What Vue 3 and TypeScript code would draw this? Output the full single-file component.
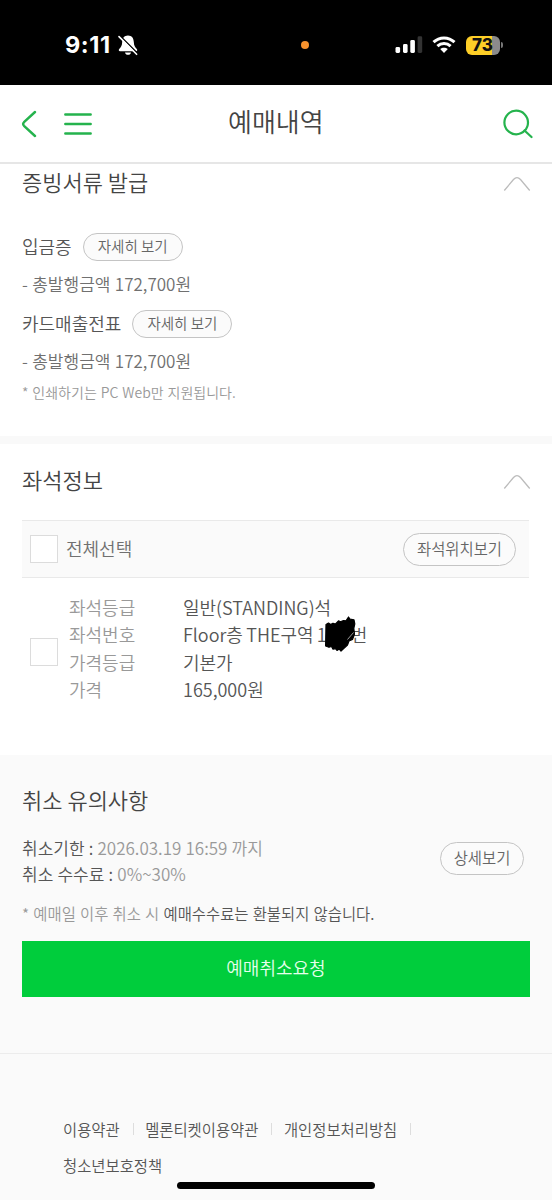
<script setup lang="ts">
interface Receipt {
  name: string
  amount: string
}

const receipts: Receipt[] = [
  { name: '입금증', amount: '- 총발행금액 172,700원' },
  { name: '카드매출전표', amount: '- 총발행금액 172,700원' },
]

interface SeatField {
  label: string
  value: string
  hidden?: boolean
}

const seatFields: SeatField[] = [
  { label: '좌석등급', value: '일반(STANDING)석' },
  { label: '좌석번호', value: 'Floor층 THE구역 1', hidden: true },
  { label: '가격등급', value: '기본가' },
  { label: '가격', value: '165,000원' },
]

const footerLinks: string[] = ['이용약관', '멜론티켓이용약관', '개인정보처리방침']
</script>

<template>
  <div class="screen">
    <div class="status">
      <span class="time">9:11</span>
      <svg class="bell" width="20" height="21" viewBox="0 0 20 21">
        <path d="M10 .5C6.200.5 4.300 3.300 4.200 7c-.1 3.800-1.400 5.300-3 7-.8.9-.4 2.200.8 2.200h16c1.200 0 1.600-1.300.8-2.200-1.600-1.700-2.900-3.200-3-7C15.700 3.300 13.800.5 10 .5Z" fill="#fff" />
        <path d="M7 17.400h6c-.3 1.600-1.400 2.400-3 2.400s-2.700-.8-3-2.400Z" fill="#fff" />
        <path d="M2.200 1 19.500 18.300" stroke="#000" stroke-width="1.500" />
        <path d="M1 1.600 18.600 19.300" stroke="#fff" stroke-width="1.600" stroke-linecap="round" />
      </svg>
      <span class="mic-dot"></span>
      <svg class="signal" width="28" height="18" viewBox="0 0 28 18">
        <rect x="0.500" y="11" width="4.600" height="6" rx="1.400" fill="#fff" />
        <rect x="8" y="8" width="4.600" height="9" rx="1.400" fill="#fff" />
        <rect x="15.300" y="4" width="4.600" height="13" rx="1.400" fill="#fff" />
        <rect x="22.600" y="0.300" width="4.600" height="16.700" rx="1.400" fill="#333" />
      </svg>
      <svg class="wifi" width="24" height="18" viewBox="0 0 24 18">
        <g fill="none" stroke="#fff" stroke-width="3">
          <path d="M1.500 6.200C7.400.5 16.600.5 22.500 6.200" />
          <path d="M5.400 10.200c3.700-3.500 9.500-3.500 13.200 0" />
        </g>
        <path d="M12 17 8.200 13.100c2.200-1.900 5.400-1.900 7.600 0Z" fill="#fff" />
      </svg>
      <span class="battery"><span class="level">73</span></span>
      <span class="battery-cap"></span>
    </div>

    <header class="header">
      <svg class="back" width="16" height="28" viewBox="0 0 16 28">
        <path d="M14 2 3 12.200Q1.300 14 3 15.800L14 26" fill="none" stroke="#25b34d" stroke-width="2.400" stroke-linecap="round" />
      </svg>
      <svg class="menu" width="28" height="24" viewBox="0 0 28 24">
        <path d="M1.300 2.500h25.400M1.300 12h25.400M1.300 21.500h25.400" stroke="#25b34d" stroke-width="2.400" stroke-linecap="round" />
      </svg>
      <h1>예매내역</h1>
      <svg class="search" width="30" height="30" viewBox="0 0 30 30">
        <circle cx="13.200" cy="13.500" r="11.800" fill="none" stroke="#25b34d" stroke-width="2.200" />
        <path d="m21.500 21.500 7 6.500" stroke="#25b34d" stroke-width="2.200" stroke-linecap="round" />
      </svg>
    </header>

    <section class="receipts">
      <div class="section-title">
        <h2>증빙서류 발급</h2>
        <svg class="chevron" width="28" height="16" viewBox="0 0 28 16">
          <path d="M1.300 14.500 10.500 3.500q3.500-3.700 7 0l9.200 11" fill="none" stroke="#bcbcbc" stroke-width="1.300" />
        </svg>
      </div>
      <div v-for="item in receipts" :key="item.name" class="receipt">
        <div class="receipt-head">
          <span>{{ item.name }}</span>
          <button class="pill small">자세히 보기</button>
        </div>
        <p>{{ item.amount }}</p>
      </div>
      <p class="print-note">* 인쇄하기는 PC Web만 지원됩니다.</p>
    </section>

    <section class="seats">
      <div class="section-title">
        <h2>좌석정보</h2>
        <svg class="chevron" width="28" height="16" viewBox="0 0 28 16">
          <path d="M1.300 14.500 10.500 3.500q3.500-3.700 7 0l9.200 11" fill="none" stroke="#bcbcbc" stroke-width="1.300" />
        </svg>
      </div>
      <div class="select-all">
        <span class="checkbox"></span>
        <span class="select-label">전체선택</span>
        <button class="pill medium">좌석위치보기</button>
      </div>
      <div class="seat">
        <span class="checkbox"></span>
        <dl>
          <div v-for="field in seatFields" :key="field.label" class="field">
            <dt>{{ field.label }}</dt>
            <dd>
              <span>{{ field.value }}</span>
              <span v-if="field.hidden" class="hidden-number">
                <svg class="scribble" width="34" height="38" viewBox="0 0 34 38">
                  <path d="M3 9.500 5.500 8l2 1.500L10 8.200l2.500.8 3-3.200 2 1 3-1.300 2.500.3L25.500 2l1.500 2.200 4 .6.800 4-1 4.700.7 5.500-2 5.500-3.500 1.500-1.500 4-6.500 6-1.700-2-2.300 1.400-1.500-1.800-2.500.6-1.500-2.700-2.500.8L2.600 31Z" fill="#000" stroke="#000" stroke-width="1.200" stroke-linejoin="round" />
                  <path d="m24.500 24.500 6-7" stroke="#ddd" stroke-width=".7" />
                </svg>
              </span>
              <span v-if="field.hidden">번</span>
            </dd>
          </div>
        </dl>
      </div>
    </section>

    <section class="cancel">
      <h2>취소 유의사항</h2>
      <div class="cancel-info">
        <div class="cancel-lines">
          <p>취소기한 : <span>2026.03.19 16:59 까지</span></p>
          <p>취소 수수료 : <span>0%~30%</span></p>
        </div>
        <button class="pill detail">상세보기</button>
      </div>
      <p class="refund-note">* 예매일 이후 취소 시 <strong>예매수수료는 환불되지 않습니다.</strong></p>
      <button class="request">예매취소요청</button>
    </section>

    <footer class="footer">
      <div class="links">
        <a v-for="link in footerLinks" :key="link">{{ link }}</a>
      </div>
      <div class="policy">청소년보호정책</div>
    </footer>
    <div class="home-bar"></div>
  </div>
</template>

<style>
body {
  margin: 0;
  background: #fafafa;
}
</style>

<style scoped>
* {
  box-sizing: border-box;
}

.screen {
  position: relative;
  width: 552px;
  height: 1200px;
  overflow: hidden;
  background: #fff;
  color: #555;
  font-family: "Noto Sans CJK KR", "Noto Sans", sans-serif;
  font-weight: 350;
  white-space: nowrap;
}

h1,
h2,
p,
dl,
dd {
  margin: 0;
  font-weight: 350;
}

button {
  padding: 0;
  font-family: inherit;
  font-weight: 350;
}

.status {
  display: flex;
  align-items: center;
  height: 85px;
  padding: 5px 0 0 65px;
  background: #000;
}

.time {
  width: 48px;
  color: #fff;
  font: 700 23.500px/30px Inter, sans-serif;
  letter-spacing: 0.600px;
}

.bell {
  margin-left: 5px;
}

.mic-dot {
  width: 8px;
  height: 8px;
  margin-left: 163px;
  border-radius: 50%;
  background: #f7922d;
}

.signal {
  margin-left: 86px;
}

.wifi {
  margin-left: 9px;
}

.battery {
  width: 34px;
  height: 19px;
  margin-left: 10px;
  overflow: hidden;
  border-radius: 6px;
  background: linear-gradient(90deg, #fdce27 76%, #8b8b8b 76%);
}

.level {
  display: block;
  padding-left: 6px;
  color: #111;
  font: 800 17px/19px Inter, sans-serif;
}

.battery-cap {
  width: 2px;
  height: 6px;
  margin-left: 1px;
  border-radius: 0 2px 2px 0;
  background: #777;
}

.header {
  display: flex;
  align-items: center;
  height: 79px;
  padding: 0 19px 0 21px;
  border-bottom: 2px solid #e6e6e6;
}

.menu {
  margin-left: 27px;
}

h1 {
  flex: 1;
  margin: -5px 0 0 136px;
  color: #444;
  font-size: 26px;
  line-height: 36px;
}

.search {
  margin-top: 1px;
}

.section-title {
  display: flex;
  align-items: center;
  justify-content: space-between;
}

h2 {
  margin-top: -2px;
  color: #444;
  font-size: 22px;
  line-height: 32px;
}

.chevron {
  margin-top: 4px;
}

.receipts {
  height: 272px;
  padding: 2px 21px 0 22px;
}

.receipts .section-title {
  height: 32px;
  margin-bottom: 35px;
}

.receipt {
  height: 77px;
}

.receipt-head {
  display: flex;
  align-items: center;
  gap: 11px;
  height: 28px;
  color: #555;
  font-size: 18px;
}

.receipt-head > span {
  margin-top: -2px;
}

.pill {
  border: 1px solid #c4c4c4;
  border-radius: 20px;
  background: #fbfbfb;
  color: #666;
}

.small {
  width: 100px;
  height: 28px;
  font-size: 14.500px;
  line-height: 24px;
  padding-bottom: 2px;
}

.receipt p {
  margin-top: 10px;
  color: #707070;
  font-size: 17px;
  line-height: 26px;
  word-spacing: 0.600px;
}

.print-note {
  margin-top: -7px;
  color: #999;
  font-size: 14px;
  line-height: 24px;
  word-spacing: 0.800px;
}

.seats {
  height: 319px;
  padding: 20px 22px 0;
  border-top: 8px solid #f9f9f9;
}

.seats .section-title {
  height: 32px;
  margin-right: -1px;
}

.select-all {
  display: flex;
  align-items: center;
  height: 58px;
  margin: 24px 1px 0 0;
  padding: 0 13px 0 8px;
  border-top: 1px solid #e9e9e9;
  border-bottom: 1px solid #e9e9e9;
  background: #fafafa;
}

.checkbox {
  flex: none;
  width: 28px;
  height: 28px;
  border: 1px solid #dcdcdc;
  background: #fff;
}

.select-label {
  flex: 1;
  margin: -2px 0 0 8px;
  color: #707070;
  font-size: 18px;
}

.medium {
  width: 113px;
  height: 33px;
  padding-bottom: 3px;
  font-size: 15.400px;
}

.seat {
  display: flex;
  align-items: center;
  padding: 15.500px 0 0 8px;
}

.seat .checkbox {
  margin-top: 7px;
}

dl {
  margin-left: 11px;
}

.field {
  display: flex;
  height: 27.500px;
  font-size: 18px;
  line-height: 27px;
}

dt {
  width: 114px;
  color: #999;
}

dd {
  display: flex;
  color: #555;
  word-spacing: -0.700px;
}

.hidden-number {
  position: relative;
  width: 24px;
}

.scribble {
  position: absolute;
  top: -6px;
  left: -4px;
}

.cancel {
  height: 298px;
  padding: 30px 22px 0;
  background: #fafafa;
}

.cancel-info {
  display: flex;
  justify-content: space-between;
  margin-top: 18px;
  padding-right: 6px;
}

.cancel-lines {
  padding-top: 2px;
}

.cancel-lines p {
  height: 26px;
  color: #555;
  font-size: 17px;
  line-height: 26px;
  word-spacing: 0.400px;
}

.cancel-lines span {
  color: #999;
}

.detail {
  width: 84px;
  height: 33px;
  margin-top: 9px;
  padding-bottom: 3px;
  font-size: 15.400px;
}

.refund-note {
  margin-top: 13px;
  color: #999;
  font-size: 15.400px;
  line-height: 26px;
  word-spacing: 0.800px;
}

.refund-note strong {
  color: #555;
  font-weight: 350;
}

.request {
  display: block;
  width: 508px;
  height: 56px;
  margin-top: 15px;
  padding-bottom: 5px;
  border: 0;
  background: #00cd3c;
  color: #e6ffec;
  font-size: 18px;
}

.footer {
  height: 147px;
  padding: 62px 0 0 63px;
  border-top: 1px solid #ececec;
  background: #fafafa;
  color: #555;
  font-size: 15.400px;
  line-height: 26px;
}

.links {
  display: flex;
}

.links a {
  display: flex;
  align-items: center;
}

.links a::after {
  width: 1px;
  height: 12px;
  margin: 0 11.500px 0 13px;
  background: #ddd;
  content: "";
}

.policy {
  margin-top: 10px;
}

.home-bar {
  position: absolute;
  bottom: 11px;
  left: 177px;
  width: 198px;
  height: 7px;
  border-radius: 4px;
  background: #000;
}
</style>
